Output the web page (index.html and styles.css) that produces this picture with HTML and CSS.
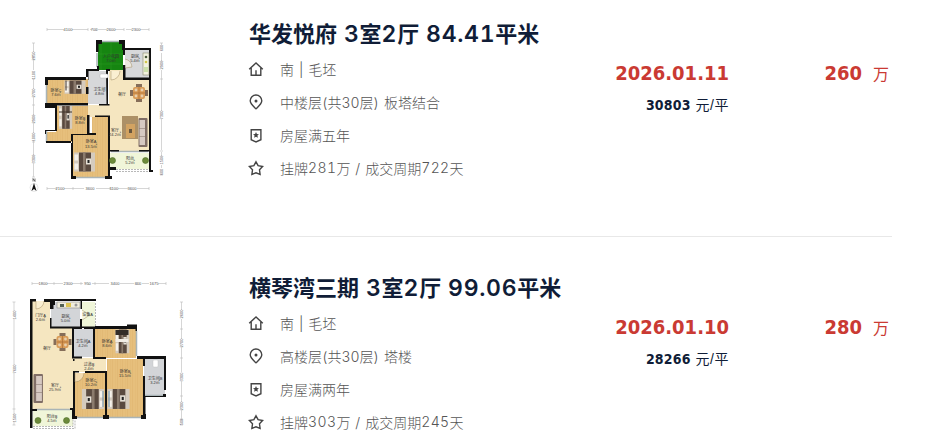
FILE: index.html
```html
<!DOCTYPE html>
<html lang="zh-CN">
<head>
  <meta charset="UTF-8" />
  <meta name="viewport" content="width=device-width, initial-scale=1.0"/>
  <title>成交房源</title>
  <link rel="stylesheet" href="styles.css">
</head>
<body>

  <!-- shared icons and furniture -->
  <svg class="defs" width="0" height="0">
    <symbol id="home" viewBox="0 0 16 16"><path d="M1.2 8.3 8 2l6.800 6.300M3.200 7v7.300h9.600V7M8 9.300v5"/></symbol>
    <symbol id="pin" viewBox="0 0 16 16"><path d="M8 14.800C5 12 2.200 9.800 2.200 6.800a5.800 5.800 0 0 1 11.600 0C13.800 9.800 11 12 8 14.800z"/><circle class="solid" cx="8" cy="6.900" r="1.500"/></symbol>
    <symbol id="badge" viewBox="0 0 16 16"><path d="M3.200 2.700h9.700v10L8 14.900l-4.800-2.200z"/><path class="solid" d="m8 5 .9 2 2.100.2-1.600 1.400.5 2.200L8 9.700l-1.900 1.100.5-2.200L5 7.200l2.100-.2z"/></symbol>
    <symbol id="star" viewBox="0 0 16 16"><path d="m8 1.800 2.100 3.900 4.500.8-3.100 3.300.6 4.600L8 12.800l-4.100 1.600.6-4.600L1.400 6.500l4.500-.8z"/></symbol>
    <g id="bed">
      <rect width="21" height="19" fill="#d5cbbe"/>
      <rect x="5" width="12" height="19" fill="#5a4a40"/>
      <rect x="9" y="0" width="2.500" height="19" fill="#8b7b6d"/>
      <rect x="12" y="6" width="5" height="6" fill="#e6e0d6"/><rect x="13.500" y="7.500" width="2" height="3" fill="#222"/>
      <rect x=".5" y="2" width="3.500" height="6" fill="#f5f1ea"/><rect x=".5" y="11" width="3.500" height="6" fill="#f5f1ea"/>
    </g>
    <g id="dining">
      <path d="M-3-9h6v3h-6zM-3 6h6v3h-6zM-9-3h3v6h-3zM6-3h3v6H6z" fill="#866e59"/>
      <rect x="-6" y="-6" width="12" height="12" rx="2" fill="#d99c58"/>
      <path d="M-6 0H6M0-6V6" stroke="#a4662d" stroke-width=".6"/>
      <circle cx="-3" cy="-3" r="1.400" fill="#e7cfae"/><circle cx="3" cy="-3" r="1.400" fill="#e7cfae"/><circle cx="-3" cy="3" r="1.400" fill="#e7cfae"/><circle cx="3" cy="3" r="1.400" fill="#e7cfae"/>
    </g>
    <g id="sofa">
      <rect width="9" height="29" rx="1" fill="#806e66"/>
      <rect x="2.500" y="2" width="5.500" height="8" fill="#d6c9c2"/><rect x="2.500" y="10.500" width="5.500" height="8" fill="#d6c9c2"/><rect x="2.500" y="19" width="5.500" height="8" fill="#d6c9c2"/>
    </g>
    <pattern id="wood" width="5" height="12" patternUnits="userSpaceOnUse"><rect width="5" height="12" fill="#e6bf7c"/><path d="M0 0v12M2.500 0v12" stroke="#dcb06a" stroke-width=".4"/></pattern>
  </svg>

  <ul class="list">
    <li class="item">
      <svg class="plan" viewBox="0 20 200 180">
        <g class="dim">
          <path d="M47 29.500h17M72 29.500h16M90 29.500h2M98 29.500h9M115 29.500h9M126 29.500h6M140 29.500h9"/>
          <path d="M47 188.500h10M64 188.500h20M96 188.500h15M118 188.500h10M137 188.500h12"/>
          <path d="M33.500 43v9M33.500 59v11M33.500 79v10M33.500 97v19M33.500 123v10M33.500 140v16M33.500 163v14"/>
          <path d="M161.500 43v2M161.500 53v9M161.500 70v41M161.500 119v31M161.500 152v5M161.500 165v3"/>
          <path d="M47 28v3M88 28v3M97 28v3M124 28v3M149 28v3M47 187v3M73 187v3M110 187v3M149 187v3M32 43h3M32 79h3M32 105h3M32 142h3M32 177h3M160 43h3M160 79h3M160 151h3M160 175h3"/>
          <text x="68" y="30.500">4100</text><text x="94" y="30.500">700</text><text x="111" y="30.500">2600</text><text x="136" y="30.500">2300</text>
          <text x="60" y="190">2100</text><text x="90" y="190">3600</text><text x="114" y="190">1100</text><text x="132" y="190">3600</text>
          <text transform="translate(35 56)rotate(-90)">2850</text><text transform="translate(35 75)rotate(-90)">1100</text><text transform="translate(35 93)rotate(-90)">2700</text><text transform="translate(35 119)rotate(-90)">2900</text><text transform="translate(35 137)rotate(-90)">1000</text><text transform="translate(35 159)rotate(-90)">3300</text>
          <text transform="translate(163 48)rotate(-90)">600</text><text transform="translate(163 65)rotate(-90)">2900</text><text transform="translate(163 115)rotate(-90)">7300</text><text transform="translate(163 160)rotate(-90)">1500</text><text transform="translate(163 172)rotate(-90)">600</text>
        </g>
        <circle cx="34" cy="187.500" r="4" fill="none" stroke="#ccc" stroke-width=".5"/>
        <path d="m34 183 2.500 8-2.500-2-2.500 2z" fill="#111"/><path d="M33 181.500v-3l2 3v-3" fill="none" stroke="#222" stroke-width=".6"/>

        <path d="M109 70h16v10h24v71h-40v-34H88v-12h21z" fill="#f5e6c0"/>
        <path d="M47 79h41v26H47zM56 106h32v29h4v-18h17v60H73v-35H47v-10h9z" fill="url(#wood)"/>
        <path d="M88 71h20v33H88zM125 50h24v28h-24z" fill="#d7d8da"/>
        <path d="M98 42h25v28H98z" fill="#168511"/>
        <path d="M101 43v27M111 43v27M98 54h25M98 64h25" stroke="#2f9a26" stroke-width=".5"/>
        <path d="M110 153h39v16h-39z" fill="#f0f6d9"/>

        <path class="window" d="M46.500 82v21M46.500 131v11M75 177.500h31M111 151.500h37M97 53v14M102 41.500h18"/>
        <path class="wall" d="M96 40h6v4h-3.500v8H96zM119 40h6v8h26v122h2v2h-4V80h-26v-2h0V50h-1v-6h-3zM123 65h2.500v12.500H149V50h-24v5h-2zM86 69h11v-3h2v5H88.500v16H86zM106 69h4v2h-2v33h1.500v1.500H99V104h7.500zM45 77h43v3H48v5h-3zM86 80h2.500v14H86zM45 103h43v2.500H57V131H46v3h-1v-4h10v-22H45zM87 115h2.500v18H96v2H73v41h3v3h-5v-45h16zM95 117v-1.500h15V176h2v3h-7v-3h3v-59zM46 141h26v2H46zM110 150h9v1.500h-9zM139 150h10v1.500h-10zM110 167h6v3h-6z"/>
        <path class="dash" d="M116 169.500h33M116 171.500h33"/>
        <path d="M111 71v9a9 9 0 0 0 9-9M125 59a9 9 0 0 1 7 8l-7 1" fill="#fff8e4" fill-opacity=".5" stroke="#a18c65" stroke-width=".5"/>

        <use href="#bed" transform="translate(64.500 80.500)scale(1 .7)"/>
        <use href="#bed" transform="translate(59 106)scale(.63 1.200)"/>
        <use href="#bed" transform="translate(74 152.500)"/>
        <path d="M66 80.500v10M59 112h13" stroke="#3f342c"/>
        <rect x="122" y="116" width="16" height="23" fill="#ac9066"/>
        <rect x="126" y="124" width="9" height="14" fill="#d2a362"/><rect x="129" y="129" width="3" height="4" fill="#67563e"/>
        <use href="#sofa" transform="translate(147.500 147)rotate(180)"/>
        <use href="#dining" transform="translate(139 93)"/>
        <rect x="143" y="53" width="6" height="22" fill="#f2f1df" stroke="#77775a" stroke-width=".5"/><circle cx="146" cy="57" r="1.300" fill="#4c5c3c"/><circle cx="146" cy="62" r="1.300" fill="#d3c748"/><rect x="144" y="67" width="4" height="5" fill="#cce0aa"/>
        <rect x="100" y="74" width="8" height="4" rx="1" fill="#fff" stroke="#aaa" stroke-width=".4"/>
        <circle class="plant" cx="112.500" cy="160.500" r="3"/><circle class="plant" cx="145.500" cy="160.500" r="3"/>

        <g class="label">
          <text x="56" y="92">卧室C</text><text x="56" y="96">7.6㎡</text>
          <text x="99.500" y="90.500">卫生间</text><text x="99.500" y="94.500">4.8㎡</text>
          <text x="135" y="58">厨房</text><text x="135" y="62">5.4㎡</text>
          <text x="111" y="58">入户花园</text><text x="111" y="62">7.0㎡</text>
          <text x="122" y="95.500">餐厅</text>
          <text x="80" y="119.500">卧室B</text><text x="80" y="123.500">8.8㎡</text>
          <text x="91" y="143">卧室A</text><text x="91" y="147.500">13.5㎡</text>
          <text x="115" y="131.500">客厅</text><text x="115" y="136">24.2㎡</text>
          <text x="130" y="160">阳台</text><text x="130" y="164">5.2㎡</text>
        </g>
      </svg>
      <div class="info">
        <h2 class="title">华发悦府 <span class="num">3</span>室<span class="num">2</span>厅 <span class="num">84.41</span>平米</h2>
        <p class="row"><svg class="icon"><use href="#home"/></svg>南 | 毛坯</p>
        <p class="row"><svg class="icon"><use href="#pin"/></svg>中楼层(共30层) 板塔结合</p>
        <p class="row"><svg class="icon"><use href="#badge"/></svg>房屋满五年</p>
        <p class="row"><svg class="icon"><use href="#star"/></svg>挂牌<span class="num">281</span>万 / 成交周期<span class="num">722</span>天</p>
      </div>
      <div class="deal">
        <div class="date">2026.01.11</div>
        <div class="unit"><b>30803</b> <span>元/平</span></div>
      </div>
      <div class="price"><b>260</b><span>万</span></div>
    </li>

    <li class="item">
      <svg class="plan" viewBox="0 274 200 156">
        <g class="dim">
          <path d="M32 283.500h7M47 283.500h16M72 283.500h11M92 283.500h17M120 283.500h14M142 283.500h7M158 283.500h8"/>
          <path d="M14 302v9M14 319v46M14 373v42M14 421v4"/>
          <path d="M181.500 302v8M181.500 319v20M181.500 347v25M181.500 381v21M181.500 410v10"/>
          <path d="M32 282v3M54 282v3M81 282v3M95 282v3M137 282v3M166 282v3M12.500 302h3M12.500 409h3M12.500 425h3M180 302h3M180 329h3M180 358h3M180 396h3M180 419h3M180 425h3"/>
          <text x="43" y="285">1800</text><text x="68" y="285">2300</text><text x="87.500" y="285">950</text><text x="115" y="285">3400</text><text x="138" y="285">600</text><text x="154" y="285">1675</text>
          <text transform="translate(15.500 315)rotate(-90)">1400</text><text transform="translate(15.500 369)rotate(-90)">7600</text><text transform="translate(15.500 418)rotate(-90)">1500</text>
          <text transform="translate(183 314)rotate(-90)">2600</text><text transform="translate(183 343)rotate(-90)">2700</text><text transform="translate(183 377)rotate(-90)">3300</text><text transform="translate(183 406)rotate(-90)">2300</text><text transform="translate(183 422)rotate(-90)">500</text>
        </g>

        <path d="M32 301h18v27h22v30h34v14H73v37H32z" fill="#f5e6c0"/>
        <path d="M95 329h41v29H95zM107 359h36v59h-36zM74 373h31v45H74z" fill="url(#wood)"/>
        <path d="M51 302h29v25H51zM74 329h19v28H74zM144 359h21v36h-21z" fill="#d3d5d8"/>
        <path d="M82 302h13v25H82zM33 410h40v16H33z" fill="#f0f6d9"/>
        <path class="window" d="M76 417.500h28M109 417.500h33M145 395.500h19M136.500 331v25M35 409.500h35M114 328h13"/>
        <path class="wall" d="M30 299h6v2.500h-3.500V409H37v2h-4.500v17H30zM44 299h52v2H82v8h-1.500v-8H55v4h-1.500v4H50v-7h-6zM50 318h1.500v8.500H80V319h2v7.500h13V326h32v-1.500h10V331h-1.500v-2H95v28h11v2H93v-30h-9v-1h-2v1h-8v27.500h8v2H72v-30H50zM137 356h29v7h-2v-4h-19v7h-2v-7h-6zM143 376h2v20h18v-2h3v3h-20.500v17h.5v5h-5v-4h2zM164 363h2v27h-2zM73 371h6v1.500h-4V416h2v3h-5v-9h-2v-2h3zM85 371h22v44h2v4h-6v-4h2v-42H85zM73 358h1.500v3H73z"/>
        <path class="dash" d="M95.500 303v24M33 426.500h40v-7M33 428.500h42v-9"/>
        <path d="M36 301v8a8 8 0 0 0 8-8M75 373v9a9 9 0 0 0 9-9M82 310l8 5-8 5" fill="#fff8e4" fill-opacity=".5" stroke="#a18c65" stroke-width=".5"/>

        <rect x="57" y="302" width="23" height="6" fill="#f0eddd" stroke="#777" stroke-width=".5"/><rect x="60" y="304" width="4" height="3" fill="#526052"/><rect x="66" y="303" width="5" height="4" fill="#dcc350"/><circle cx="76" cy="305" r="1.500" fill="#999"/>
        <use href="#bed" transform="translate(115.500 329.500)scale(.66 1.250)"/>
        <path d="M115.500 330h13v5h-13z" fill="#332c28"/><path d="M115.500 339h13v3h-13z" fill="#f1ece5"/>
        <use href="#bed" transform="translate(104 409)rotate(180)scale(1.050)"/>
        <use href="#bed" transform="translate(107.500 389)scale(1.050)"/>
        <path d="M103 391v16M109 391v16" stroke="#7894a2" stroke-width="1.200"/>
        <use href="#sofa" transform="translate(33.500 374)scale(1.050 1)"/>
        <use href="#dining" transform="translate(62.500 342)"/>
        <rect x="153" y="360" width="5" height="7" rx="1" fill="#fff" stroke="#bbb" stroke-width=".4"/>
        <circle class="plant" cx="38" cy="420.500" r="3"/><circle class="plant" cx="66.500" cy="420.500" r="3"/>

        <g class="label">
          <text x="40.500" y="317">门厅A</text><text x="40.500" y="321">2.6㎡</text>
          <text x="65.500" y="318">厨房</text><text x="65.500" y="322">5.0㎡</text>
          <text x="87.500" y="315.500">设备A</text>
          <text x="83" y="342.500">卫生间A</text><text x="83" y="346.500">4.2㎡</text>
          <text x="107" y="342.500">卧室A</text><text x="107" y="346.500">8.6㎡</text>
          <text x="47" y="349.500">餐厅</text>
          <text x="89" y="365.500">过道B</text><text x="89" y="369.500">2.4㎡</text>
          <text x="125" y="372.500">卧室B</text><text x="125" y="376.500">15.5㎡</text>
          <text x="155" y="380">卫生间B</text><text x="155" y="384">3.2㎡</text>
          <text x="91" y="381.500">卧室C</text><text x="91" y="385.500">10.2㎡</text>
          <text x="55" y="387">客厅</text><text x="55" y="391">25.9㎡</text>
          <text x="52" y="418">阳台B</text><text x="52" y="422">4.5㎡</text>
        </g>
      </svg>
      <div class="info">
        <h2 class="title">横琴湾三期 <span class="num">3</span>室<span class="num">2</span>厅 <span class="num">99.06</span>平米</h2>
        <p class="row"><svg class="icon"><use href="#home"/></svg>南 | 毛坯</p>
        <p class="row"><svg class="icon"><use href="#pin"/></svg>高楼层(共30层) 塔楼</p>
        <p class="row"><svg class="icon"><use href="#badge"/></svg>房屋满两年</p>
        <p class="row"><svg class="icon"><use href="#star"/></svg>挂牌<span class="num">303</span>万 / 成交周期<span class="num">245</span>天</p>
      </div>
      <div class="deal">
        <div class="date">2026.01.10</div>
        <div class="unit"><b>28266</b> <span>元/平</span></div>
      </div>
      <div class="price"><b>280</b><span>万</span></div>
    </li>
  </ul>

</body>
</html>
```
FILE: styles.css
```css
* { box-sizing: border-box; }
body { margin: 0; background: #fff; font-family: "Liberation Sans", "Noto Sans CJK SC", sans-serif; }
.defs { position: absolute; }
.list { list-style: none; margin: 0; padding: 0; width: 892px; }
.item { display: flex; align-items: flex-start; height: 197px; padding-top: 37px; overflow: hidden; }
.item:first-child { height: 237px; padding-top: 20px; border-bottom: 1px solid #e8e8e8; }

.plan { width: 200px; height: 156px; flex: none; margin-right: 49px; }
.item:first-child .plan { height: 180px; }
.wall { fill: #111; fill-rule: evenodd; }
.window { fill: none; stroke: #a9b4b6; stroke-width: 1.5; }
.dash { fill: none; stroke: #999; stroke-width: .7; stroke-dasharray: 2 1; }
.dim path { fill: none; stroke: #bbb; stroke-width: .6; }
.dim text { font-size: 4px; fill: #555; text-anchor: middle; }
.label { font-size: 4px; fill: #333; text-anchor: middle; }
.plant { fill: #6c8a3a; stroke: #4f6e2a; stroke-width: .6; }

.info { width: 331px; flex: none; }
.title { margin: 0 0 4px; height: 28px; line-height: 28px; font-family: Inter, "Noto Sans CJK SC", sans-serif; font-size: 22px; font-weight: 600; color: #101d37; white-space: nowrap; word-spacing: 1px; font-variant-numeric: tabular-nums; }
.title .num { font-size: 23px; letter-spacing: .7px; }
.row { display: flex; align-items: center; margin: 0; height: 33px; font-family: Inter, "Noto Sans CJK SC", sans-serif; font-size: 14px; font-weight: 300; color: #555; white-space: pre; word-spacing: 1.2px; font-variant-numeric: tabular-nums; }
.row .num { letter-spacing: .4px; }
.icon { width: 16px; height: 16px; margin: 0 16px 0 -1px; fill: none; stroke: #444; stroke-width: 1.4; }
.solid { fill: #444; stroke: none; }

.deal { width: 149px; padding-top: 40px; text-align: right; }
.date { height: 26px; line-height: 26px; font-family: "DejaVu Sans Condensed", "DejaVu Sans", sans-serif; font-size: 20px; font-weight: bold; font-stretch: condensed; color: #ca3a33; }
.unit { margin-top: 8px; height: 22px; line-height: 22px; font-size: 14px; color: #101d37; }
.unit span { margin-left: 1px; letter-spacing: .5px; }
.unit b, .price b { font-family: "DejaVu Sans Condensed", "DejaVu Sans", sans-serif; font-stretch: condensed; }
.unit b { letter-spacing: .2px; }
.price { display: flex; flex: 1; justify-content: flex-end; align-items: baseline; gap: 11px; padding: 40px 3px 0 0; line-height: 26px; font-size: 16px; color: #ca3a33; }
.price b { font-size: 20px; }
```
